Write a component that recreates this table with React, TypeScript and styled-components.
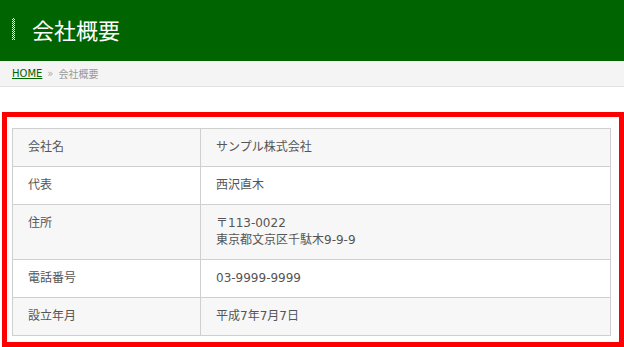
import React from "react";
import styled, { createGlobalStyle } from "styled-components";

const GlobalStyle = createGlobalStyle`
  html, body {
    margin: 0;
    padding: 0;
    background: #fff;
    font-family: "DejaVu Sans", "Noto Sans CJK JP", sans-serif;
  }
`;

const PageHeader = styled.header`
  height: 61px;
  background: #006400;
  display: flex;
  align-items: center;
  padding-left: 12px;
  gap: 17px;
  box-sizing: border-box;
`;

const TitleMark = styled.span`
  width: 3px;
  height: 22px;
  margin-top: -4px;
  background: repeating-conic-gradient(#fff 0 25%, transparent 0 50%) 0 0 / 2px 2px;
`;

const Title = styled.h1`
  margin: 0 0 4px;
  font-size: 22px;
  font-weight: normal;
  color: #fff;
`;

const Breadcrumb = styled.nav`
  height: 25px;
  background: #f4f4f4;
  border-bottom: 1px solid #e2e2e2;
  display: flex;
  align-items: center;
  padding-left: 12px;
  font-size: 10px;
  color: #999;
  gap: 5px;
`;

const CrumbLink = styled.a`
  color: #006400;
  text-decoration: underline;
`;

const Sep = styled.span`
  color: #aaa;
`;

const Section = styled.section`
  margin: 25px 0 0 2px;
  border: 5px solid #ff0000;
  padding: 11px 8px 6px 5px;
`;

const InfoTable = styled.table`
  width: 100%;
  table-layout: fixed;
  border-collapse: collapse;
  font-size: 12px;
  color: #555;
  line-height: 17px;
`;

const LabelCol = styled.col`
  width: 188px;
`;

const Row = styled.tr<{ $shaded: boolean }>`
  background: ${(p) => (p.$shaded ? "#f7f7f7" : "#fff")};
`;

const HeadCell = styled.th`
  text-align: left;
  font-weight: normal;
  vertical-align: top;
  padding: 10px 15px;
  border: 1px solid #cfcfcf;
`;

const DataCell = styled.td`
  vertical-align: top;
  padding: 10px 15px;
  border: 1px solid #cfcfcf;
`;

const rows: { label: string; value: string[] }[] = [
  { label: "会社名", value: ["サンプル株式会社"] },
  { label: "代表", value: ["西沢直木"] },
  { label: "住所", value: ["〒113-0022", "東京都文京区千駄木9-9-9"] },
  { label: "電話番号", value: ["03-9999-9999"] },
  { label: "設立年月", value: ["平成7年7月7日"] },
];

export default function App() {
  return (
    <>
      <GlobalStyle />
      <PageHeader>
        <TitleMark />
        <Title>会社概要</Title>
      </PageHeader>
      <Breadcrumb>
        <CrumbLink href="#">HOME</CrumbLink>
        <Sep>»</Sep>
        <span>会社概要</span>
      </Breadcrumb>
      <Section>
        <InfoTable>
          <colgroup>
            <LabelCol />
            <col />
          </colgroup>
          <tbody>
            {rows.map((r, i) => (
              <Row key={r.label} $shaded={i % 2 === 0}>
                <HeadCell>{r.label}</HeadCell>
                <DataCell>
                  {r.value.map((line, j) => (
                    <React.Fragment key={j}>
                      {j > 0 && <br />}
                      {line}
                    </React.Fragment>
                  ))}
                </DataCell>
              </Row>
            ))}
          </tbody>
        </InfoTable>
      </Section>
    </>
  );
}
